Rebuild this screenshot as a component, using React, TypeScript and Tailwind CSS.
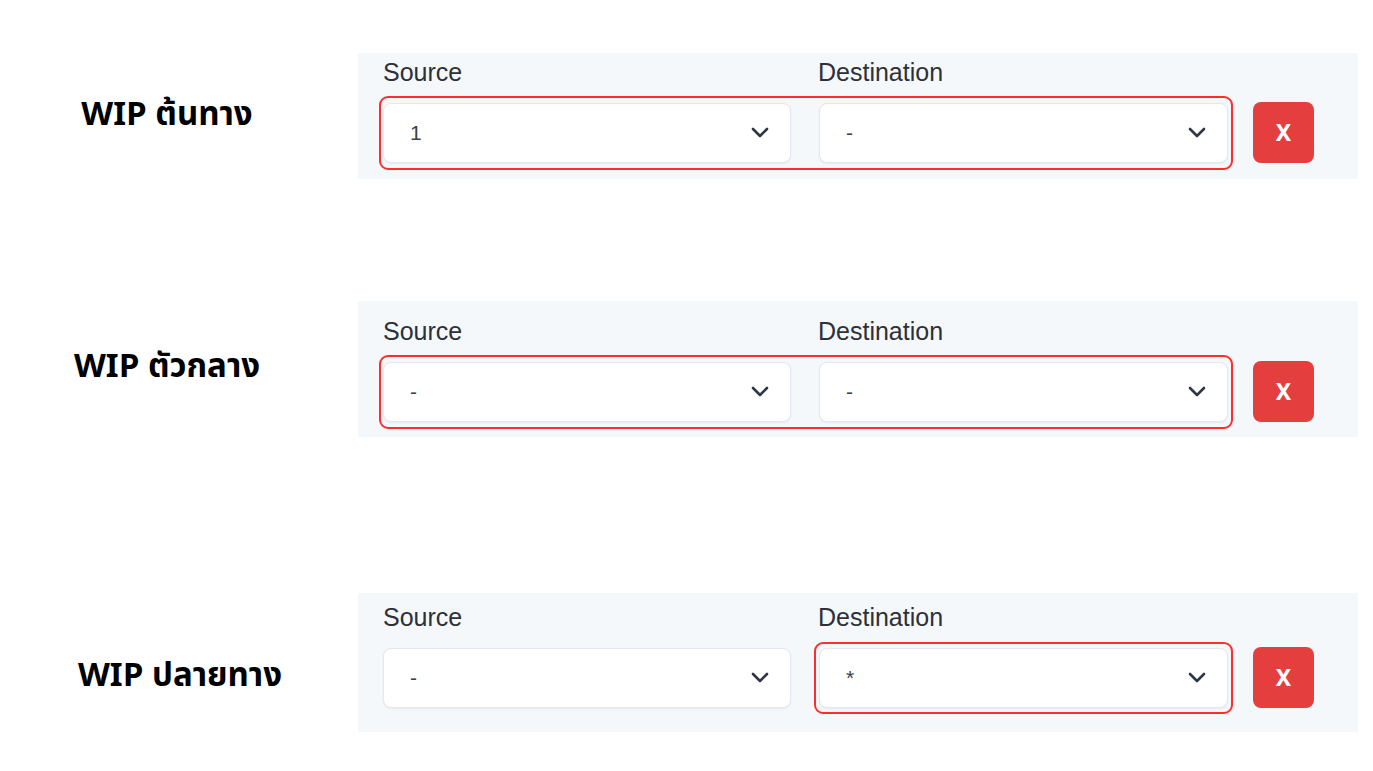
import React from "react";

function Chevron() {
  return (
    <svg width="18" height="11" viewBox="0 0 18 11" fill="none" className="shrink-0">
      <path d="M2 2l7 7 7-7" stroke="#2d3748" strokeWidth="2.6" strokeLinecap="round" strokeLinejoin="round" />
    </svg>
  );
}

function Select({ value, w }: { value: string; w: string }) {
  return (
    <div
      className={`${w} h-[60px] bg-white rounded-[8px] border border-[#e2e8f0] shadow-[0_1px_2px_rgba(0,0,0,0.06)] flex items-center justify-between pl-[26px] pr-[21px]`}
    >
      <span className="text-[21px] text-[#3c414a]" style={{ fontFamily: '"Liberation Sans", Arial, sans-serif' }}>
        {value}
      </span>
      <Chevron />
    </div>
  );
}

function XButton() {
  return (
    <button className="w-[61px] h-[61px] rounded-[8px] bg-[#e53e3e] text-white text-[23px] font-bold flex items-center justify-center">
      X
    </button>
  );
}

type RowProps = {
  label: string;
  src: string;
  dst: string;
  outline: "both" | "dst";
  panelPad: string;
  labelPad: string;
};

function Row({ label, src, dst, outline, panelPad, labelPad }: RowProps) {
  return (
    <div className="flex items-center">
      <div className={`w-[358px] shrink-0 ${labelPad}`}>
        <div
          className="w-[334px] text-center text-[33px] font-bold text-black"
          style={{ fontFamily: '"Noto Sans Thai", "Noto Sans", "Liberation Sans", sans-serif' }}
        >
          {label}
        </div>
      </div>
      <div className={`w-[1000px] bg-[#f5f8fb] pl-[25px] ${panelPad}`}>
        <div
          className="flex text-[25px] leading-[30px] text-[#2d3038]"
          style={{ fontFamily: '"Liberation Sans", Arial, sans-serif' }}
        >
          <div className="w-[435px]">Source</div>
          <div>Destination</div>
        </div>
        <div className="flex items-center mt-[15px]">
          <div className="relative flex gap-[28px]">
            <Select value={src} w="w-[408px]" />
            <div className="relative">
              <Select value={dst} w="w-[409px]" />
              {outline === "dst" && (
                <div className="absolute -left-[5px] -right-[5px] -top-[6px] -bottom-[6px] border-2 border-[#ff2d2d] rounded-[9px] pointer-events-none" />
              )}
            </div>
            {outline === "both" && (
              <div className="absolute -left-[4px] -right-[5px] -top-[7px] -bottom-[7px] border-2 border-[#ff2d2d] rounded-[9px] pointer-events-none" />
            )}
          </div>
          <div className="ml-[25px]">
            <XButton />
          </div>
        </div>
      </div>
    </div>
  );
}

export default function App() {
  return (
    <div className="w-[1373px] h-[771px] bg-white overflow-hidden pt-[53px]">
      <Row label="WIP ต้นทาง" src="1" dst="-" outline="both" panelPad="pt-[4px] pb-[16px]" labelPad="" />
      <div className="h-[122px]" />
      <Row label="WIP ตัวกลาง" src="-" dst="-" outline="both" panelPad="pt-[15px] pb-[15px]" labelPad="pb-[2px]" />
      <div className="h-[156px]" />
      <Row label="WIP ปลายทาง" src="-" dst="*" outline="dst" panelPad="pt-[9px] pb-[24px]" labelPad="pt-[28px] pl-[13px]" />
    </div>
  );
}
